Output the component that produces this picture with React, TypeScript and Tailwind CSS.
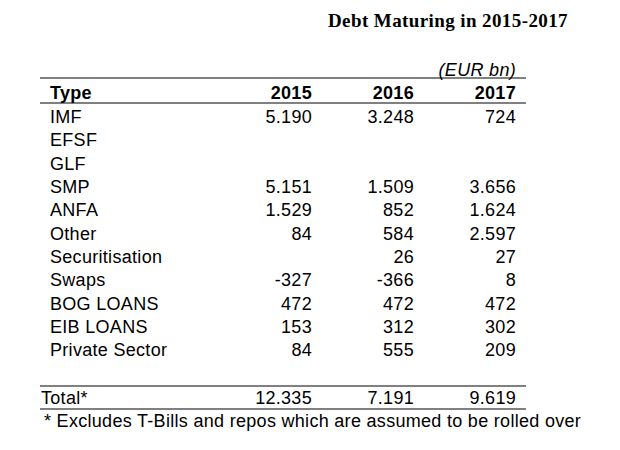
const rows: [string, string, string, string][] = [
  ['IMF', '5.190', '3.248', '724'],
  ['EFSF', '', '', ''],
  ['GLF', '', '', ''],
  ['SMP', '5.151', '1.509', '3.656'],
  ['ANFA', '1.529', '852', '1.624'],
  ['Other', '84', '584', '2.597'],
  ['Securitisation', '', '26', '27'],
  ['Swaps', '-327', '-366', '8'],
  ['BOG LOANS', '472', '472', '472'],
  ['EIB LOANS', '153', '312', '302'],
  ['Private Sector', '84', '555', '209'],
]

const grid = 'grid grid-cols-[172px_100px_102px_102px]'

export default function App() {
  return (
    <div className="w-[620px] h-[450px] bg-white text-black overflow-hidden font-['Liberation_Sans',Arial,sans-serif] text-[18px] tracking-[0.3px]">
      <div className="h-[31px] pt-[11px] pl-[328px] font-['Liberation_Serif',serif] font-bold text-[19px] leading-[20px] tracking-[0.4px] whitespace-nowrap">
        Debt Maturing in 2015-2017
      </div>

      <div className="ml-[40px] w-[486px]">
        <div className="h-[46px] pt-[30px] pr-[10px] text-right italic leading-[18px]">(EUR bn)</div>

        <div className="border-t-2 border-b-2 border-[#808080]">
          <div className={`${grid} h-[23px] pt-[5px] leading-[19px] font-bold`}>
            <div className="pl-[10px]">Type</div>
            <div className="text-right">2015</div>
            <div className="text-right">2016</div>
            <div className="text-right">2017</div>
          </div>
        </div>

        <div className="pt-[2px]">
          {rows.map(([name, a, b, c]) => (
            <div key={name} className={`${grid} h-[23.35px] leading-[23.35px]`}>
              <div className="pl-[10px] whitespace-nowrap">{name}</div>
              <div className="text-right">{a}</div>
              <div className="text-right">{b}</div>
              <div className="text-right">{c}</div>
            </div>
          ))}
        </div>

        <div className="mt-[22px] border-t-2 border-b-2 border-[#808080]">
          <div className={`${grid} h-[21px] pt-[1px] leading-[21px]`}>
            <div className="pl-[1px]">Total*</div>
            <div className="text-right">12.335</div>
            <div className="text-right">7.191</div>
            <div className="text-right">9.619</div>
          </div>
        </div>

        <div className="pt-[2px] pl-[4px] leading-[19px] whitespace-nowrap">
          * Excludes T-Bills and repos which are assumed to be rolled over
        </div>
      </div>
    </div>
  )
}
